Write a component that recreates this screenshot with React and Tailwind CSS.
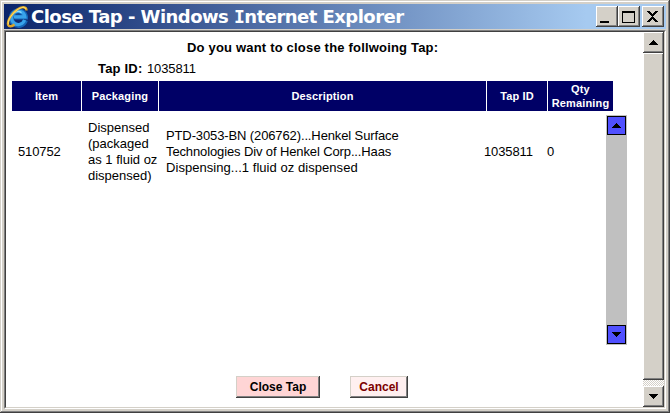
const ieFont = "font-['Liberation_Sans',Arial,sans-serif]";

function IELogo() {
  return (
    <svg width="22" height="23" viewBox="0 0 22 23" className="block shrink-0">
      <path d="M19.400 15.200A7.200 7.200 0 1 1 19.600 12H8.500" fill="none" stroke="#1667b8" strokeWidth="5" />
      <path d="M18.600 15A6.700 6.700 0 1 1 18.900 11.800H8" fill="none" stroke="#38a3ea" strokeWidth="3.200" />
      <path d="M8.500 7.600a6 6 0 0 1 7 0" fill="none" stroke="#8bdcff" strokeWidth="1.400" />
      <path d="M20.500 5.500C20.500 1.500 16 1 11 4.600C5.500 8.500 .8 16 2.200 20C3 22 6 21.500 8.500 19.500" fill="none" stroke="#d9a52c" strokeWidth="2.400" />
      <path d="M20 3.800C18 1 13 2.800 9 6.600C4.500 11 1.600 16 2.400 19.400" fill="none" stroke="#ffd95c" strokeWidth="1.200" />
    </svg>
  );
}

const raised =
  "shadow-[inset_-1px_-1px_0_#404040,inset_1px_1px_0_#ffffff,inset_-2px_-2px_0_#808080] bg-[#d4d0c8]";

function CaptionButton({ kind }) {
  return (
    <div className={`h-[21px] w-[22px] shrink-0 ${raised}`}>
      <svg width="22" height="21" shapeRendering="crispEdges" className="block">
        {kind === "min" && <rect x="4" y="15" width="9" height="2" />}
        {kind === "max" && <path d="M4 5h13v12H4zM5 7v9h11V7z" fillRule="evenodd" />}
        {kind === "close" && (
          <path d="M5 5h3v1h1v1h1v1h1v-1h1v-1h1v-1h3v1h-1v1h-1v1h-1v1h-1v1h-1v1h1v1h1v1h1v1h1v1h1v1h-3v-1h-1v-1h-1v-1h-1v1h-1v1h-1v1h-3v-1h1v-1h1v-1h1v-1h1v-1h1v-1h-1v-1h-1v-1h-1v-1h-1v-1h-1z" />
        )}
      </svg>
    </div>
  );
}

function Arrow({ down }) {
  return (
    <svg width="9" height="5" shapeRendering="crispEdges" className="block">
      <path d={down ? "M0 0h9v1h-1v1h-1v1h-1v1h-1v1h-1v-1h-1v-1h-1v-1h-1v-1h-1z" : "M4 0h1v1h1v1h1v1h1v1h1v1H0v-1h1v-1h1v-1h1v-1h1z"} />
    </svg>
  );
}

function WindowScrollbar() {
  return (
    <div className="flex w-[21px] shrink-0 flex-col bg-[#d4d0c8]">
      <div className={`flex h-[21px] items-center justify-center ${raised}`}><Arrow /></div>
      <div className={`h-[327px] ${raised}`} />
      <div className="h-[6px] bg-[repeating-conic-gradient(#d4d0c8_0_25%,#ffffff_0_50%)] bg-[length:2px_2px]" />
      <div className={`flex h-[21px] items-center justify-center ${raised}`}><Arrow down /></div>
    </div>
  );
}

function ListScrollbar() {
  return (
    <div className="flex h-[230px] w-[21px] flex-col justify-between bg-[#c0c0c0] p-px">
      <div className="flex h-[19px] items-center justify-center border border-black bg-[#5050ff]"><Arrow /></div>
      <div className="flex h-[19px] items-center justify-center border border-black bg-[#5050ff]"><Arrow down /></div>
    </div>
  );
}

function Head({ className, children }) {
  return <div className={`flex items-center justify-center bg-[#000066] text-center ${className}`}>{children}</div>;
}

export default function App() {
  return (
    <div className={`flex h-[413px] w-[670px] flex-col overflow-hidden bg-[#d4d0c8] p-[4px] text-black shadow-[inset_-1px_-1px_0_#404040,inset_1px_1px_0_#d4d0c8,inset_-2px_-2px_0_#808080,inset_2px_2px_0_#ffffff] ${ieFont}`}>
      <div className="flex h-[25px] shrink-0 items-center bg-[linear-gradient(90deg,#0a246a,#a6caf0_88%)] pr-[2px] pl-[2px]">
        <IELogo />
        <div className="ml-[3px] flex-1 pt-px font-['DejaVu_Sans',Verdana,sans-serif] text-[18px] leading-[24px] font-bold tracking-[-0.53px] whitespace-pre text-white">
          Close Tap - Windows <span className="font-['DejaVu_Sans_Mono',monospace]">I</span>nternet Explorer
        </div>
        <CaptionButton kind="min" />
        <CaptionButton kind="max" />
        <div className="w-[2px]" />
        <CaptionButton kind="close" />
      </div>
      <div className="mt-px flex h-[379px] w-[662px] shrink-0 border-t border-r border-b border-l border-t-[#808080] border-r-white border-b-white border-l-[#808080]">
        <div className="flex w-full border-t border-r border-b border-l border-t-[#404040] border-r-[#d4d0c8] border-b-[#d4d0c8] border-l-[#404040] bg-white">
          <main className="w-[637px] shrink-0 text-[13px] tracking-[-0.12px]">
            <div className="flex h-[49px] flex-col pt-[8px]">
              <div className="pl-[181px] leading-[16px] font-bold tracking-[0.19px] whitespace-nowrap">Do you want to close the follwoing Tap:</div>
              <div className="mt-[5px] pl-[92px] leading-[16px] whitespace-nowrap"><b className="mr-[1px] tracking-[0.2px]">Tap ID:</b> 1035811</div>
            </div>
            <div className="ml-[6px] flex h-[30px] gap-px text-[11px] leading-[14px] font-bold tracking-[0.15px] text-white">
              <Head className="w-[69px]">Item</Head>
              <Head className="w-[76px]">Packaging</Head>
              <Head className="w-[327px]">Description</Head>
              <Head className="w-[60px]">Tap ID</Head>
              <Head className="w-[65px]">Qty<br />Remaining</Head>
            </div>
            <div className="flex pt-[4px] leading-[16px]">
              <div className="flex h-[73px] w-[600px] shrink-0 items-center whitespace-nowrap">
                <div className="w-[70px] pl-[12px]">510752</div>
                <div className="w-[78px] pl-[12px] tracking-normal">Dispensed<br />(packaged<br />as 1 fluid oz<br />dispensed)</div>
                <div className="w-[330px] pl-[12px]">PTD-3053-BN (206762)...Henkel Surface<br />Technologies Div of Henkel Corp...Haas<br /><span className="tracking-[0.05px]">Dispensing...1 fluid oz dispensed</span></div>
                <div className="w-[63px]">1035811</div>
                <div>0</div>
              </div>
              <ListScrollbar />
            </div>
            <div className="mt-[31px] flex gap-[30px] pl-[230px] text-[12px] leading-[22px] font-bold tracking-normal">
              <button className="h-[22px] w-[84px] bg-[#ffd5d5] shadow-[inset_-1px_-1px_0_#404040,inset_1px_1px_0_#d4d0c8,inset_-2px_-2px_0_#808080]">Close Tap</button>
              <button className="h-[22px] w-[58px] bg-[#fff0f0] text-[#7c0000] shadow-[inset_-1px_-1px_0_#404040,inset_1px_1px_0_#d4d0c8,inset_-2px_-2px_0_#808080]">Cancel</button>
            </div>
          </main>
          <WindowScrollbar />
        </div>
      </div>
    </div>
  );
}
